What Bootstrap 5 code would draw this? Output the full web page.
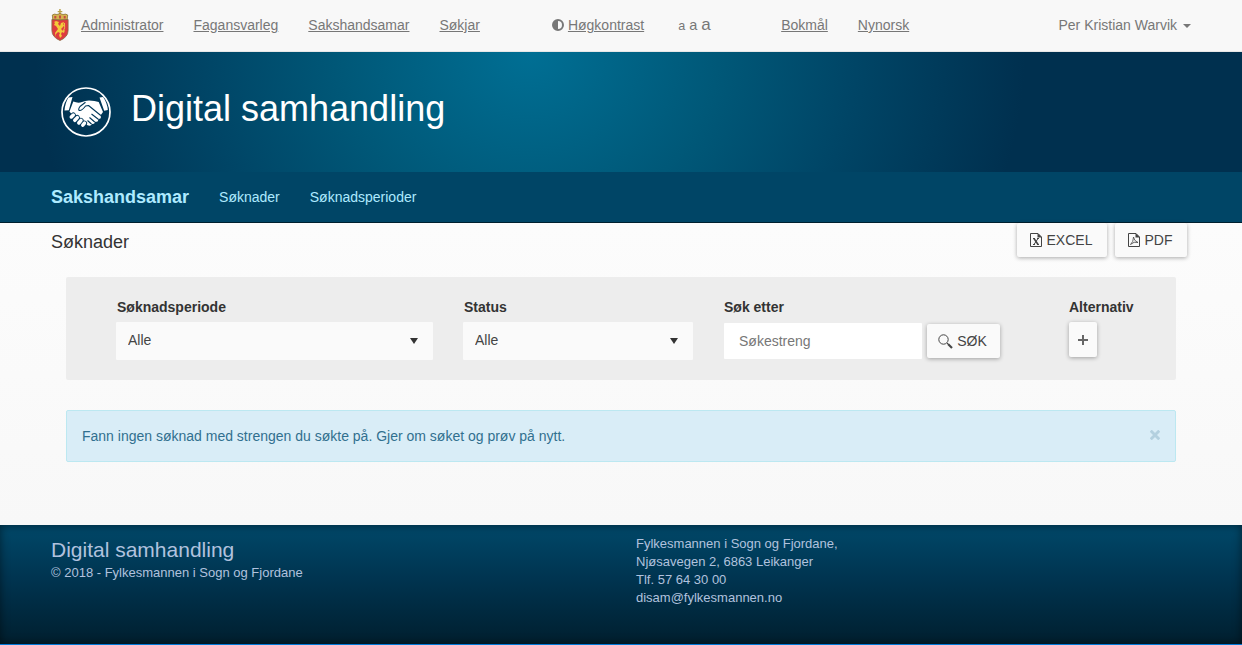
<!DOCTYPE html>
<html lang="nn">
<head>
<meta charset="utf-8">
<meta name="viewport" content="width=device-width, initial-scale=1">
<title>Digital samhandling</title>
<link rel="stylesheet" href="https://cdn.jsdelivr.net/npm/bootstrap@5.3.0/dist/css/bootstrap.min.css">
<style>
body{font:14px/20px "Liberation Sans",Arial,sans-serif;color:#333;background:linear-gradient(#fcfcfc 223px,#f8f8f8 525px)}
.page-width{width:1170px;max-width:1170px;padding:0 15px}
.topbar{height:52px;background:#f8f8f8;border-bottom:1px solid #e7e7e7;color:#777}
.topbar .page-width{height:50px}
.topbar a{color:#777}
.user-menu{text-decoration:none}
.user-menu::after{margin-left:6px;border-top-width:4px;border-left-width:4px;border-right-width:4px;vertical-align:2px}
.size-s{font-size:12.6px}.size-m{font-size:14.500px}.size-l{font-size:17px}
.hero{height:120px;background:radial-gradient(ellipse 495px 440px at 530px 0,#006f94,#005878 38%,#004566 66%,#00304f);color:#fff}
.hero h1{font-size:36px;line-height:40px;font-weight:400}
.subnav{height:51px;background:#004566;border-bottom:1px solid #00202f}
.subnav a{color:#aeeaff;text-decoration:none}
.subnav .section-name{font-size:18px;font-weight:700}
.content-area{height:302px}
.page-title{font-size:18px;line-height:20px;font-weight:400}
.btn-raised{background:#fafafa;color:#444;border:0;border-radius:2px;font-size:14px;line-height:20px;padding:0 2px 0 0;box-shadow:0 1px 4px rgba(0,0,0,.33);height:34px}
.filter-panel{height:103px;background:#ededed;border-radius:2px;margin:0 15px;padding:20px 0 0 50px}
.filter-panel label{line-height:20px;font-weight:700;margin-left:1px}
.filter-select{height:38px;border:0;border-radius:1px;background-color:#fafafa;color:#444;padding:0 12px 2px;font-size:14px;line-height:36px;
background-image:url("data:image/svg+xml,%3Csvg xmlns='http://www.w3.org/2000/svg' viewBox='0 0 8 6'%3E%3Cpath d='M0 0h8L4 6z' fill='%23333'/%3E%3C/svg%3E");background-size:8px 6px;background-position:right 15px top 16px}
.filter-input{height:36px;border:0;border-radius:1px;width:198px;font-size:14px;padding:0 15px;color:#555}
.filter-input::placeholder{color:#777;opacity:1}
.notice{height:52px;margin:30px 15px 0;padding:0 15px;border-radius:2px;background:#d9edf7;border:1px solid #bce8f1;color:#31708f}
.notice button{border:0;background:none;padding:0;line-height:0}
.site-footer{height:119px;background:linear-gradient(#004869,#003450 45%,#001f2f);box-shadow:inset 0 0 10px rgba(0,0,0,.5);color:#b1c2de;font-size:13px;line-height:18px}
.site-footer h2{font-size:21px;line-height:24px;font-weight:400}
.bottom-line{height:1px;background:#0078d7}
</style>
</head>
<body>
<header>
<nav class="topbar">
<div class="container page-width d-flex align-items-center">
<svg width="18" height="32" viewBox="0 0 18 32" class="flex-shrink-0">
<path d="M8.200 0h1.500v2h1.600v1.300H9.700V6H8.200V3.300H6.700V2h1.500z" fill="#b8a34c"/>
<path d="M1.800 11L1.300 6Q3 4.500 6 5.500L9 4.500l3 1q3-1 4.700.5L16.200 11z" fill="#d5b450" stroke="#80642e" stroke-width=".7"/>
<path d="M3.300 7h2v2.500h-2zm4.700-.5h2v3H8zm4.700.5h2v2.500h-2z" fill="#c54c42"/>
<path d="M.9 10.500q8 1 16.200 0v11q0 6.500-8.100 10Q.9 28 .9 21.500z" fill="#de3b40" stroke="#866c43" stroke-width=".8"/>
<path d="M5 12l3 1-1 2 2 2 1-3 3-1-1 3 2-1-2 3-2 2 2 2 2-1-1 3-2-1-1 2 1 2-2 2-1-3 1-2-2-1-2 2v3l-1-4 3-4-2-3-2-1 1-2-1-1z" fill="#f2ca39"/>
<path d="M13.500 14q1 5-1.500 9" fill="none" stroke="#eac545"/>
</svg>
<a href="#" style="margin-left:12px">Administrator</a>
<a href="#" style="margin-left:30px">Fagansvarleg</a>
<a href="#" style="margin-left:30px">Sakshandsamar</a>
<a href="#" style="margin-left:30px">Søkjar</a>
<svg width="12" height="12" viewBox="0 0 12 12" style="margin-left:72px"><circle cx="6" cy="6" r="5" fill="none" stroke="#777" stroke-width="2"/><path d="M6 1a5 5 0 000 10z" fill="#777"/></svg>
<a href="#" style="margin-left:4px">Høgkontrast</a>
<div class="d-flex align-items-baseline" style="gap:4px;margin:1px 0 0 34px;width:32px"><span class="size-s">a</span><span class="size-m">a</span><span class="size-l">a</span></div>
<a href="#" style="margin-left:71px">Bokmål</a>
<a href="#" style="margin-left:30px">Nynorsk</a>
<a href="#" class="ms-auto dropdown-toggle user-menu">Per Kristian Warvik</a>
</div>
</nav>
<div class="hero">
<div class="container page-width d-flex">
<svg width="52" height="52" viewBox="0 0 52 52" style="margin:34px 0 0 9px">
<circle cx="26" cy="26" r="24" fill="none" stroke="#fff" stroke-width="1.700"/>
<path d="M8.500 11.500l4-.5-3.700 13.300-4.300.2q.7-8 4-13zM39.500 11.500l3.600-.5q4.200 6 4.700 13l-3.600.8z" fill="#fff"/>
<path d="M13.300 15.500Q18 17.500 22 16q3-1.500 7-1.500 6 0 9.700 1.500L43 26l-2.500 3.500q1.500 3.500-2.200 3.500 0 3.500-3.300 2.700-.5 2.800-3 2-1 2.800-4.500 1.600L12 28.500l-2.500-3z" fill="#fff"/>
<g stroke="#00385a" stroke-width="5.200" stroke-linecap="round"><path d="M11.300 31l2-2M14.800 34.300l2.500-2.700M18.800 37l2.200-2.600M22.800 39.200l1.700-2"/></g>
<g stroke="#fff" stroke-width="3.500" stroke-linecap="round"><path d="M11.300 31l2-2M14.800 34.300l2.500-2.700M18.800 37l2.200-2.600M22.800 39.200l1.700-2"/></g>
<path d="M25.500 16.300L20 20.500q-2.200 3-.7 4 2.500.5 6.200-4.500l3-.5 12.300 10M31.500 28l6.800 5.200M29.500 31.500l5.200 4.500M27.500 34.500l4 3.500" fill="none" stroke="#00385a" stroke-width="1.100" stroke-linejoin="round"/>
</svg>
<h1 class="mb-0" style="margin:37px 0 0 19px">Digital samhandling</h1>
</div>
</div>
<nav class="subnav">
<div class="container page-width d-flex align-items-center h-100" style="gap:30px">
<a href="#" class="section-name">Sakshandsamar</a><a href="#">Søknader</a><a href="#">Søknadsperioder</a>
</div>
</nav>
</header>
<main class="content-area">
<div class="container page-width">
<div class="d-flex justify-content-between" style="height:54px;padding-right:4px">
<h2 class="page-title mb-0" style="margin-top:9px">Søknader</h2>
<div class="d-flex gap-2">
<button class="btn btn-raised d-flex align-items-center justify-content-center" style="width:90px;gap:5px">
<svg width="12" height="14" viewBox="0 0 12 14" fill="none" stroke="#444"><path d="M.5.500h7.500l3.500 3.500v9.500H.5z"/><path d="M7.500 0L12 4.500H7.500z" fill="#444" stroke="none"/><path d="M3 5.500h2m2 0h2M3 11.500h2m2 0h2"/><path d="M4 5.500l4 6" stroke-width="1.600"/><path d="M8 5.500l-4 6"/></svg>EXCEL</button>
<button class="btn btn-raised d-flex align-items-center justify-content-center" style="width:72px;gap:5px">
<svg width="12" height="14" viewBox="0 0 12 14" fill="none" stroke="#444"><path d="M.5.500h7.500l3.500 3.500v9.500H.5z"/><path d="M7.500 0L12 4.500H7.500z" fill="#444" stroke="none"/><path d="M5.500 4q.5 4 4.500 5.500Q6 8 2.500 11.500 5.500 9 5.500 4z" stroke-width=".8"/></svg>PDF</button>
</div>
</div>
<form class="filter-panel d-flex align-items-start">
<div style="width:317px;margin-right:30px"><label for="period">Søknadsperiode</label>
<select id="period" class="form-select filter-select" style="margin-top:5px"><option>Alle</option></select></div>
<div style="width:230px;margin-right:31px"><label for="status">Status</label>
<select id="status" class="form-select filter-select" style="margin-top:5px"><option>Alle</option></select></div>
<div><label for="query" class="ms-0">Søk etter</label>
<div class="d-flex" style="margin-top:6px;gap:5px"><input id="query" class="form-control filter-input" placeholder="Søkestreng">
<button type="button" class="btn btn-raised d-flex align-items-center justify-content-center" style="width:73px;margin-top:1px;gap:4px">
<svg width="15" height="15" viewBox="0 0 15 15" fill="none" stroke="#444"><circle cx="5.500" cy="5.500" r="4.700"/><path d="M9 9l1.500 1.500"/><path d="M10 10l4 4" stroke-width="2.200"/></svg>SØK</button></div></div>
<div style="margin-left:69px"><label class="ms-0 d-block">Alternativ</label>
<button type="button" aria-label="Alternativ" class="btn btn-raised d-flex align-items-center justify-content-center" style="width:28px;height:35px;margin-top:5px">
<svg width="10" height="10" viewBox="0 0 10 10" style="margin:1px 0 0 1px"><path d="M5 0v10M0 5h10" stroke="#666" stroke-width="2"/></svg></button></div>
</form>
<div class="notice d-flex align-items-center justify-content-between"><span>Fann ingen søknad med strengen du søkte på. Gjer om søket og prøv på nytt.</span>
<button aria-label="Lukk"><svg width="10" height="10" viewBox="0 0 10 10" style="margin-bottom:3px"><path d="M.7.700l8.600 8.600m0-8.600L.7 9.300" stroke="#b3d0df" stroke-width="2.900"/></svg></button></div>
</div>
</main>
<footer>
<div class="site-footer">
<div class="container page-width d-flex">
<div style="width:585px;padding-top:13px"><h2 class="mb-0">Digital samhandling</h2><div style="margin-top:2px">© 2018 - Fylkesmannen i Sogn og Fjordane</div></div>
<address class="mb-0" style="padding-top:10px;line-height:18px">Fylkesmannen i Sogn og Fjordane,<br>Njøsavegen 2, 6863 Leikanger<br>Tlf. 57 64 30 00<br>disam@fylkesmannen.no</address>
</div>
</div>
<div class="bottom-line"></div>
</footer>
<script src="https://cdn.jsdelivr.net/npm/bootstrap@5.3.0/dist/js/bootstrap.bundle.min.js"></script>
</body>
</html>
